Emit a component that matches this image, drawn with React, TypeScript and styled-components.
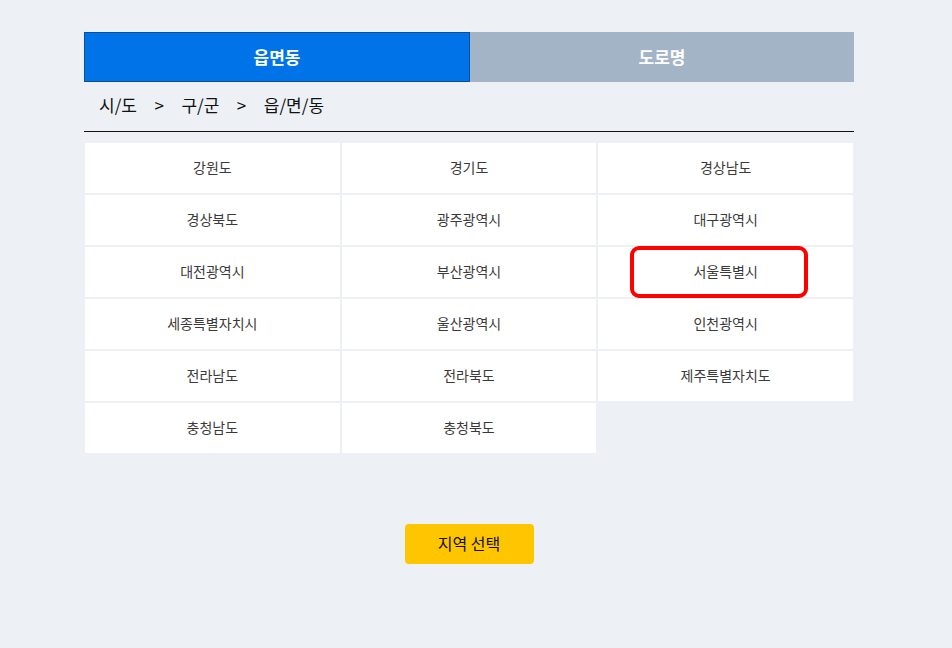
import React from 'react';
import styled, { createGlobalStyle } from 'styled-components';

const regions = [
	'강원도',
	'경기도',
	'경상남도',
	'경상북도',
	'광주광역시',
	'대구광역시',
	'대전광역시',
	'부산광역시',
	'서울특별시',
	'세종특별자치시',
	'울산광역시',
	'인천광역시',
	'전라남도',
	'전라북도',
	'제주특별자치도',
	'충청남도',
	'충청북도',
];

function App() {
	return (
		<>
			<GlobalStyle />
			<Wrapper>
				<Tabs>
					<Tab active>읍면동</Tab>
					<Tab>도로명</Tab>
				</Tabs>
				<Breadcrumb>
					<span>시/도</span>
					<Sep>&gt;</Sep>
					<span>구/군</span>
					<Sep>&gt;</Sep>
					<span>읍/면/동</span>
				</Breadcrumb>
				<Grid>
					{regions.map((name) => (
						<Cell key={name}>
							{name}
							{name === '서울특별시' && <Highlight />}
						</Cell>
					))}
				</Grid>
				<SelectButton>지역 선택</SelectButton>
			</Wrapper>
		</>
	);
}

const GlobalStyle = createGlobalStyle`
	body {
		margin: 0;
		background: #edf1f6;
		font-family: 'Noto Sans CJK KR', 'Noto Sans', sans-serif;
	}
`;

const Wrapper = styled('div')`
	width: 770px;
	margin: 0 0 0 84px;
	padding-top: 32px;
	display: flex;
	flex-direction: column;
`;

const Tabs = styled('div')`
	display: flex;
	height: 50px;
`;

const Tab = styled('div')<{ active?: boolean }>`
	flex: 1;
	display: flex;
	align-items: center;
	justify-content: center;
	box-sizing: border-box;
	padding-bottom: 2px;
	font-size: 17px;
	font-weight: 700;
	color: #fff;
	background: ${(p) => (p.active ? '#0073e9' : '#a3b4c6')};
	border: ${(p) => (p.active ? '1px solid #0b4f9c' : 'none')};
`;

const Breadcrumb = styled('div')`
	height: 50px;
	box-sizing: border-box;
	display: flex;
	align-items: center;
	padding: 0 0 5px 15px;
	gap: 6px;
	font-size: 17px;
	color: #111;
	border-bottom: 1px solid #111;
`;

const Sep = styled('span')`
	margin: 0 11.5px;
`;

const Grid = styled('div')`
	margin: 11px 1px 0 1px;
	display: grid;
	grid-template-columns: repeat(3, 1fr);
	gap: 2px;
`;

const Cell = styled('div')`
	position: relative;
	height: 50px;
	box-sizing: border-box;
	padding-bottom: 3px;
	background: #fff;
	display: flex;
	align-items: center;
	justify-content: center;
	font-size: 14px;
	color: #3a3a3a;
`;

const Highlight = styled('div')`
	position: absolute;
	left: 32px;
	top: -1px;
	width: 178px;
	height: 52px;
	box-sizing: border-box;
	border: 4px solid #f00;
	border-radius: 9px;
`;

const SelectButton = styled('button')`
	align-self: center;
	margin-top: 71px;
	width: 129px;
	height: 40px;
	padding: 0 0 2px;
	border: none;
	border-radius: 4px;
	background: #ffc600;
	font-family: inherit;
	font-size: 16px;
	color: #111;
	cursor: pointer;
`;

export default App;
